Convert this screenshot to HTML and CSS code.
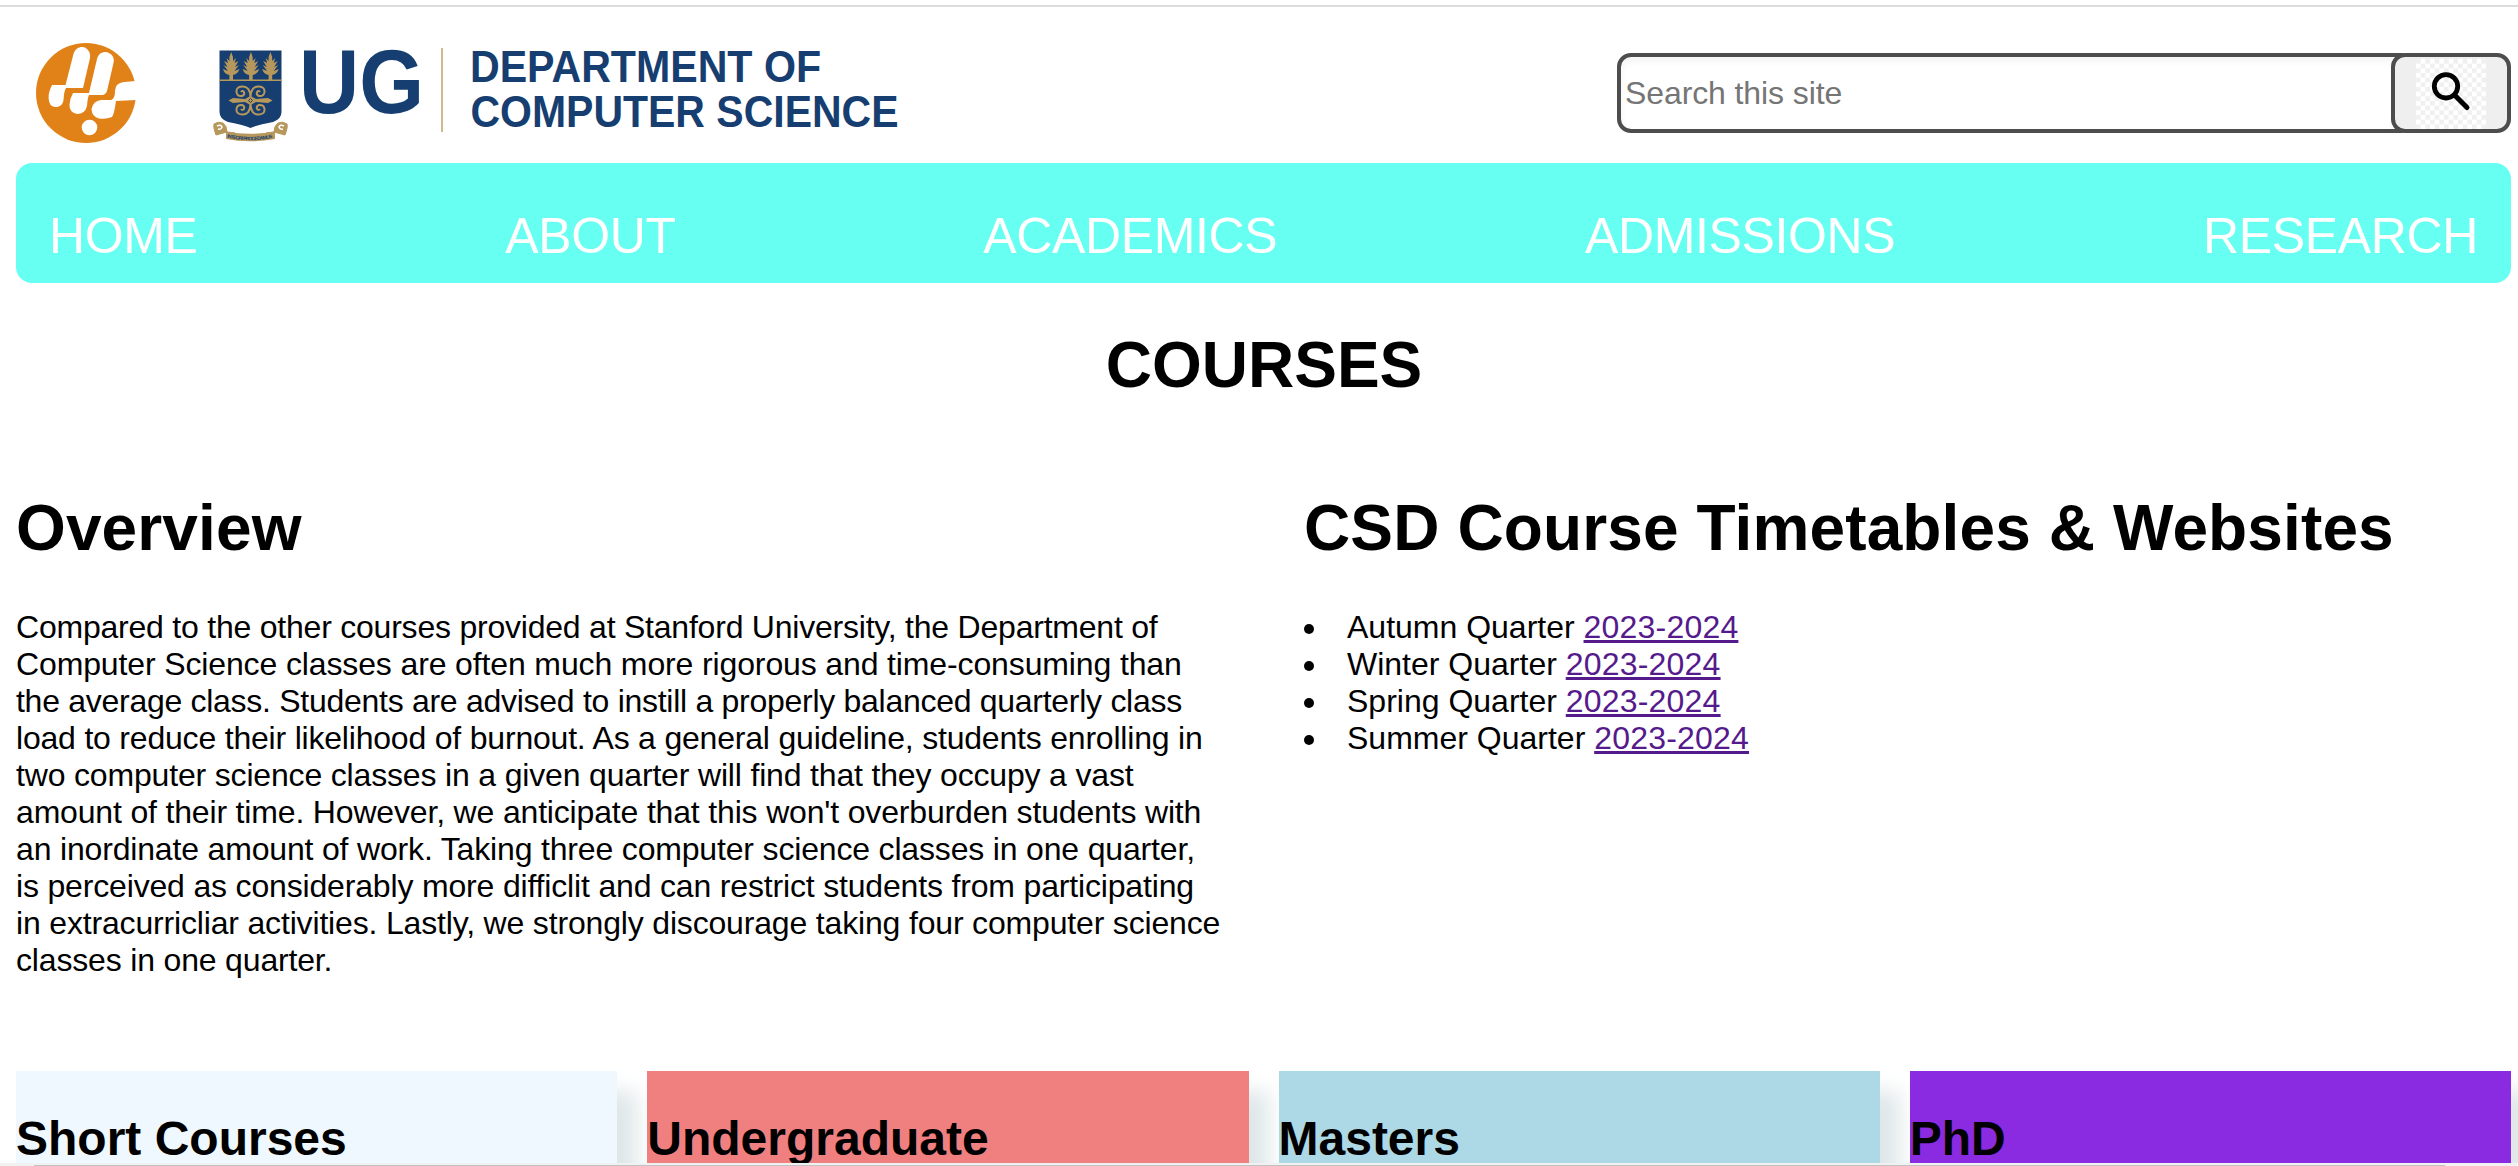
FILE: index.html
```html
<!DOCTYPE html>
<html lang="en">
<head>
<meta charset="utf-8">
<title>Courses</title>
<link rel="stylesheet" href="styles.css">
</head>
<body>
<header class="header">
  <svg class="logo" viewBox="0 0 100 100">
    <circle cx="50" cy="50" r="50" fill="#e18219"/>
    <g fill="#fff">
      <path d="M16 42H29.500L37.500 11C39.500 4 46 3 49 4.500Q55 8 54 15L47 45H30Q28 48 27.500 57C27 62 23 64.500 19 64Q13 63 12.700 56Q12 50 16 42Z"/>
      <path d="M37 50H53L61 16C63 9 69 8 73 10Q79 13 77.500 20L71 48Q69.500 52 66 52H53Q51.500 55 51 63Q49 71 41 71Q33 69 33.500 62Q34 55 37 50Z"/>
      <path d="M101 38L88 39Q79 40 79 48Q79 56 75 57L65 57Q57 58 55.500 66Q56 74 63 75.500Q70 76.500 76 74Q78 72 80 58L101 57Z"/>
      <circle cx="53.500" cy="84.500" r="7.800"/>
    </g>
  </svg>
  <svg class="crest" viewBox="0 0 76 92">
    <path d="M6.500 .5H68.500V62Q68.500 69 60 72Q44 75 37.500 78Q31 75 15 72Q6.500 69 6.500 62Z" fill="#163e70"/>
    <g fill="#b7985c">
      <g id="tree"><path d="M18.200 2L20 7V11L23 8L21.500 13L25.500 11L22 17L26 15L21.500 21L26.500 19Q25 24 20 25V30H16.400V25Q11 24 10 19L15 21L10.500 15L14.500 17L11 11L15 13L13.500 8L16.400 11V7Z"/></g>
      <use href="#tree" x="19.700"/><use href="#tree" x="39.200"/>
      <path d="M6.500 29.500H68.500V31H6.500Z"/>
      <path d="M15.500 50.500L20 48L32 49L37.500 46L43 49L55 48L59.500 50.500L55 53L43 52L37.500 55L32 52L20 53Z"/>
    </g>
    <g fill="none" stroke="#b7985c" stroke-width="2">
      <path d="M37.500 47Q37 36 29 36.500Q23 37 23.500 42Q24 46.500 29 46Q32 45 31 42Q29.500 40 28 42M37.500 47Q38 36 46 36.500Q52 37 51.500 42Q51 46.500 46 46Q43 45 44 42Q45.500 40 47 42M37.500 54Q37 65 29 64.500Q23 64 23.500 59Q24 54.500 29 55Q32 56 31 59Q29.500 61 28 59M37.500 54Q38 65 46 64.500Q52 64 51.500 59Q51 54.500 46 55Q43 56 44 59Q45.500 61 47 59"/>
    </g>
    <path d="M35.500 50.500L37.500 48.500L39.500 50.500L37.500 52.500Z" fill="#b7985c" stroke="#163e70" stroke-width="1"/>
    <path d="M14 82L3 85Q0 77 1 74Q5 71 10 73Q14 76 14 82L22 83V86L13 86M61 82L72 85Q75 77 74 74Q70 71 65 73Q61 76 61 82L53 83V86L62 86" fill="#b7985c" stroke="#b7985c"/>
    <path d="M4 76Q8 74 9 77Q8 80 5 79M71 76Q67 74 66 77Q67 80 70 79" fill="none" stroke="#fff" stroke-width="1.500"/>
    <path id="motto" d="M14 87.500Q37 93 62 87.500" fill="none"/>
    <path d="M13 81.500Q37 86 62 81.500V89Q37 93.500 13 89Z" fill="#b7985c"/>
    <text class="motto"><textPath href="#motto" textLength="46">INTEGRI PROCEDAMUS</textPath></text>
  </svg>
  <svg class="wordmark" viewBox="-10 -20 620 120">
    <text class="ug" x="-2" y="65" textLength="125" lengthAdjust="spacingAndGlyphs">UG</text>
    <path d="M141 0V84" stroke="#d0b98c" stroke-width="2"/>
    <text class="dept" x="169" y="34.300" textLength="351" lengthAdjust="spacingAndGlyphs">DEPARTMENT OF</text>
    <text class="dept" x="169.500" y="78.700" textLength="428" lengthAdjust="spacingAndGlyphs">COMPUTER SCIENCE</text>
  </svg>
  <form class="search">
    <input class="search-input" type="text" placeholder="Search this site">
    <button class="search-button" type="button" aria-label="Search">
      <svg viewBox="0 0 70 70" width="70" height="70">
        <defs><pattern id="checker" width="9.333" height="9.333" patternUnits="userSpaceOnUse"><path d="M4.667 0H9.333V4.667H4.667ZM0 4.667H4.667V9.333H0Z" fill="#fff"/></pattern></defs>
        <rect width="70" height="70" fill="#f0f0f0"/>
        <rect width="70" height="70" fill="url(#checker)"/>
        <circle cx="30" cy="27.300" r="11.700" fill="none" stroke="#000" stroke-width="4.800"/>
        <path d="M38.500 36L51 48.500" stroke="#000" stroke-width="5" stroke-linecap="round"/>
      </svg>
    </button>
  </form>
</header>
<nav class="nav"><a>HOME</a><a>ABOUT</a><a>ACADEMICS</a><a>ADMISSIONS</a><a>RESEARCH</a></nav>
<main>
  <h1 class="title">COURSES</h1>
  <div class="columns">
    <section>
      <h1 class="heading">Overview</h1>
      <p class="copy">
        <span>Compared to the other courses provided at Stanford University, the Department of</span>
        <span>Computer Science classes are often much more rigorous and time-consuming than</span>
        <span>the average class. Students are advised to instill a properly balanced quarterly class</span>
        <span>load to reduce their likelihood of burnout. As a general guideline, students enrolling in</span>
        <span>two computer science classes in a given quarter will find that they occupy a vast</span>
        <span>amount of their time. However, we anticipate that this won't overburden students with</span>
        <span>an inordinate amount of work. Taking three computer science classes in one quarter,</span>
        <span>is perceived as considerably more difficlit and can restrict students from participating</span>
        <span>in extracurricliar activities. Lastly, we strongly discourage taking four computer science</span>
        <span>classes in one quarter.</span>
      </p>
    </section>
    <section>
      <h1 class="heading timetables">CSD Course Timetables &amp; Websites</h1>
      <ul class="terms">
        <li>Autumn Quarter <a href="#">2023-2024</a></li>
        <li>Winter Quarter <a href="#">2023-2024</a></li>
        <li>Spring Quarter <a href="#">2023-2024</a></li>
        <li>Summer Quarter <a href="#">2023-2024</a></li>
      </ul>
    </section>
  </div>
  <div class="cards">
    <div class="card short"><h2>Short Courses</h2></div>
    <div class="card under"><h2>Undergraduate</h2></div>
    <div class="card masters"><h2>Masters</h2></div>
    <div class="card phd"><h2>PhD</h2></div>
  </div>
</main>
<footer class="scrollbar"><div class="thumb"></div></footer>
</body>
</html>
```
FILE: styles.css
```css
* { box-sizing: border-box; }
html, body { height: 1166px; overflow: hidden; }
body { margin: 0; padding: 5px 0 0; display: flex; flex-direction: column; background: #fff; color: #000; font: 32px/37px "Liberation Sans", Arial, sans-serif; }
h1, h2, p, ul { margin: 0; }
.header { height: 158px; flex: none; border-top: 2px solid #dcdcdc; padding: 36px 7px 0 36px; display: flex; align-items: flex-start; }
.logo { width: 100px; height: 100px; overflow: hidden; }
.crest { width: 76px; height: 92px; margin: 7px 0 0 77px; }
.motto { font: bold 5px "Liberation Sans", Arial, sans-serif; fill: #163e70; }
.wordmark { width: 620px; height: 120px; margin: -15px 0 0 2px; }
.ug { font: bold 90px "Liberation Sans", Arial, sans-serif; fill: #163e70; }
.dept { font: bold 45px "Liberation Sans", Arial, sans-serif; fill: #163e70; }
.search { display: flex; margin: 10px 0 0 auto; }
.search-input { width: 786px; height: 80px; padding: 0 4px; border: 4px solid #4d4d4d; border-radius: 14px 0 0 14px; font: 32px "Liberation Sans", Arial, sans-serif; letter-spacing: -0.1px; box-shadow: inset 0 4px 8px #0000000d; }
.search-input::placeholder { color: #757575; }
.search-button { width: 120px; height: 80px; margin-left: -12px; padding: 2px 0 0; border: 4px solid #4d4d4d; border-radius: 14px; background: #efefef; display: flex; justify-content: center; z-index: 1; }
.nav { height: 120px; flex: none; margin: 0 7px 0 16px; padding: 45px 33px 0; display: flex; justify-content: space-between; border-radius: 16px; background: #66fff2; color: #fff; font-size: 50px; line-height: 57px; letter-spacing: -0.35px; }
main { flex: 1; min-height: 0; overflow: hidden; }
.title { margin-top: 45px; padding-left: 10px; text-align: center; font-size: 64px; line-height: 74px; }
.columns { display: grid; grid-template-columns: 1288px 1fr; margin-top: 89px; padding-left: 16px; height: 580px; }
.heading { font-size: 64px; line-height: 74px; letter-spacing: 0.12px; }
.copy, .terms { margin-top: 44px; white-space: nowrap; }
.copy span { display: block; letter-spacing: -0.17px; }
.copy span:nth-child(1) { letter-spacing: -0.22px; }
.copy span:nth-child(2) { letter-spacing: -0.13px; }
.copy span:nth-child(3) { letter-spacing: -0.28px; }
.copy span:nth-child(4) { letter-spacing: -0.2px; }
.terms { padding: 0; list-style: none; }
.terms li::before { content: ""; display: inline-block; width: 10px; height: 10px; margin-right: 33px; border-radius: 50%; background: #000; vertical-align: 4px; }
.terms a { color: #551a8b; letter-spacing: 0.2px; }
.cards { display: grid; grid-template-columns: repeat(4, 601.25px); gap: 30px; padding-left: 16px; }
.card { height: 300px; padding-top: 40px; box-shadow: 20px 20px 20px #dfe7e9; }
.card h2 { font-size: 48px; line-height: 55px; }
.short { background: #f0f8ff; }
.under { background: #f08080; }
.masters { background: #add8e6; }
.phd { background: #8a2be2; }
.scrollbar { height: 3px; flex: none; margin-right: 1px; padding: 2px 72px 0 34px; background: #f1f1f1; }
.thumb { height: 1px; background: #c1c1c1; }
```
